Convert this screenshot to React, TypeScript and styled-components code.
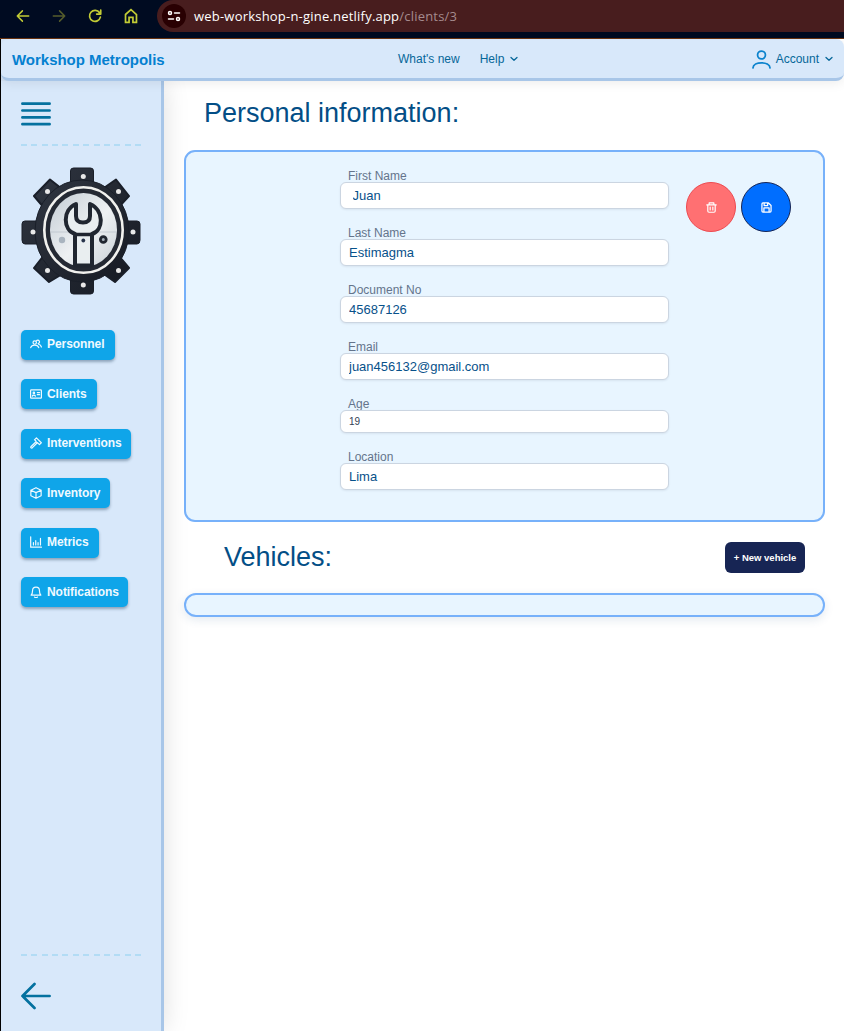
import React from "react";
import styled, { createGlobalStyle } from "styled-components";

const GlobalStyle = createGlobalStyle`
  * { box-sizing: border-box; }
  html, body { margin: 0; background: #fff; }
  body { font-family: "Liberation Sans", Arial, sans-serif; overflow: hidden; }
  button, input { font-family: inherit; margin: 0; }
`;

const Page = styled.div`
  width: 844px;
  height: 1031px;
  display: flex;
  flex-direction: column;
  overflow: hidden;
`;

const BrowserBar = styled.div`
  height: 39px;
  flex: none;
  display: flex;
  align-items: flex-start;
  background: #000b21;
  border-bottom: 1px solid #6b3410;
`;

const BrowserNav = styled.div`
  display: flex;
  width: 157px;
  height: 31px;
  align-items: center;
  gap: 20px;
  padding-left: 15px;
  flex: none;
  svg { flex: none; }
`;

const AddressBar = styled.div`
  flex: 1;
  height: 32px;
  display: flex;
  align-items: center;
  background: #481d1e;
  border-radius: 16px 0 0 16px;
  padding: 0 0 1px 5px;
`;

const SiteBadge = styled.span`
  width: 24px;
  height: 24px;
  border-radius: 50%;
  background: #290002;
  display: grid;
  place-items: center;
  margin-right: 8px;
`;

const Url = styled.span`
  font: 13px/20px "Open Sans", "Noto Sans", sans-serif;
  letter-spacing: 0.21px;
  color: #fff;
  white-space: nowrap;
`;

const UrlPath = styled.span`
  color: #a58b8e;
`;

const Shell = styled.div`
  flex: 1;
  min-height: 0;
  display: flex;
  flex-direction: column;
  border-left: 1px solid #000;
  background: linear-gradient(to right, #d8e8fa 50%, #fff 50%);
`;

const Header = styled.header`
  position: relative;
  z-index: 2;
  height: 42px;
  flex: none;
  display: grid;
  grid-template-columns: 397px 1fr auto;
  align-items: center;
  background: #d8e8fa;
  border-bottom: 3px solid #a8c6e8;
  border-radius: 8px;
  box-shadow: 0 2px 12px rgba(0, 0, 0, 0.08);
  padding-right: 11px;
`;

const Brand = styled.div`
  padding-left: 11px;
  font-size: 15px;
  font-weight: 700;
  letter-spacing: -0.02px;
  padding-top: 2px;
  color: #0480d0;
`;

const HeaderGroup = styled.nav`
  display: flex;
  align-items: center;
  gap: 20px;
`;

const HeaderItem = styled.a`
  display: flex;
  align-items: center;
  font-size: 12px;
  color: #066799;
  svg.chevron { margin-left: 6px; }
  svg.user { margin: 1px 5px 0 0; }
`;

const Body = styled.div`
  flex: 1;
  min-height: 0;
  display: flex;
`;

const Sidebar = styled.aside`
  position: relative;
  z-index: 1;
  width: 163px;
  flex: none;
  display: flex;
  flex-direction: column;
  align-items: flex-start;
  background: #d8e8fa;
  border-right: 3px solid #a8c6e8;
  box-shadow: 0 0 24px rgba(0, 0, 0, 0.13);
  padding: 21px 20px;
`;

const IconButton = styled.button`
  padding: 0;
  border: 0;
  background: none;
  display: block;
  svg { display: block; }
`;

const Dashes = styled.div`
  width: 120px;
  height: 2px;
  flex: none;
  background: repeating-linear-gradient(90deg, #b2dcf5 0 6px, transparent 6px 10.36px);
`;

const TopDashes = styled(Dashes)`
  margin: 18px 0 21px;
`;

const Logo = styled.svg`
  display: block;
  flex: none;
`;

const Menu = styled.nav`
  display: flex;
  flex-direction: column;
  align-items: flex-start;
  gap: 19.5px;
  margin-top: 33.75px;
`;

const MenuButton = styled.button<{ $width: number }>`
  width: ${(p) => p.$width}px;
  height: 30px;
  display: flex;
  align-items: center;
  gap: 5px;
  padding: 0 0 1px 9px;
  border: 0;
  border-radius: 5px;
  background: #0fa5e9;
  color: #f0f9ff;
  font-size: 12px;
  font-weight: 700;
  letter-spacing: -0.06px;
  white-space: nowrap;
  box-shadow: 0 2px 3px rgba(30, 60, 90, 0.4);
  svg { flex: none; }
`;

const SidebarFooter = styled.div`
  margin-top: auto;
  height: 56px;
  display: flex;
  flex-direction: column;
  justify-content: space-between;
`;

const Main = styled.main`
  flex: 1;
  display: flex;
  flex-direction: column;
  padding: 0 19px 0 20px;
  background: #fff;
`;

const Title = styled.h1`
  margin: 0;
  font-size: 27px;
  font-weight: 400;
  line-height: 32px;
  color: #034e86;
`;

const PageTitle = styled(Title)`
  padding: 16px 0 21px 20px;
`;

const Card = styled.section`
  background: #e8f5ff;
  border: 2px solid #77b1fa;
  border-radius: 11px;
`;

const InfoCard = styled(Card)`
  height: 372px;
  display: flex;
  padding: 16px 0 0 154px;
`;

const Fields = styled.div`
  width: 329px;
  display: flex;
  flex-direction: column;
  gap: 16px;
`;

const Field = styled.label`
  display: flex;
  flex-direction: column;
`;

const Label = styled.span`
  height: 14px;
  padding-left: 8px;
  font-size: 12px;
  line-height: 17px;
  color: #64748b;
`;

const Input = styled.input<{ $small?: boolean; $inset?: boolean }>`
  width: 100%;
  height: ${(p) => (p.$small ? 23 : 27)}px;
  padding: 0 8px 0 ${(p) => (p.$inset ? 11.5 : 8)}px;
  border: 1px solid #cbd5e1;
  border-radius: 6px;
  background: #fff;
  outline: none;
  font-size: ${(p) => (p.$small ? 10 : 13)}px;
  color: ${(p) => (p.$small ? "#334155" : "#07518a")};
  box-shadow: 0 1px 2px rgba(20, 40, 60, 0.08);
`;

const Actions = styled.div`
  display: flex;
  gap: 5px;
  margin: 14px 0 0 17px;
`;

const RoundButton = styled.button<{ $fill: string; $edge: string }>`
  width: 50px;
  height: 50px;
  padding: 0;
  display: grid;
  place-items: center;
  border-radius: 50%;
  border: 1px solid ${(p) => p.$edge};
  background: ${(p) => p.$fill};
`;

const VehiclesHead = styled.div`
  height: 71px;
  display: flex;
  align-items: center;
  justify-content: space-between;
  padding: 0 20px 2px 40px;
`;

const NewVehicle = styled.button`
  width: 80px;
  height: 31px;
  margin-top: 2px;
  padding: 0;
  border: 0;
  border-radius: 6px;
  background: #172554;
  color: #fff;
  font-size: 9.5px;
  font-weight: 700;
  white-space: nowrap;
`;

const VehiclesCard = styled(Card)`
  height: 24px;
  border-radius: 12px;
  box-shadow: 0 3px 10px rgba(30, 80, 130, 0.12);
`;

type IconProps = { size?: number; children: React.ReactNode; width?: number; color?: string; className?: string };

const Icon = ({ size = 12, width = 1.4, color = "currentColor", children, className }: IconProps) => (
  <svg className={className} width={size} height={size} viewBox="0 0 14 14" fill="none" stroke={color}
    strokeWidth={width} strokeLinecap="round" strokeLinejoin="round">
    {children}
  </svg>
);

const Chevron = () => (
  <svg className="chevron" width="8" height="8" viewBox="0 0 8 8" fill="none" stroke="#066799" strokeWidth="1.3"
    strokeLinecap="round" strokeLinejoin="round">
    <path d="M1 2.5 4 5.3 7 2.5" />
  </svg>
);

const menuItems = [
  {
    label: "Personnel", width: 94,
    icon: <><circle cx="5.5" cy="5.3" r="2" /><path d="M.8 11.300C1.500 9 3.300 8.300 5.500 8.300s4 .7 4.700 3M7.500 3.300a2 2 0 1 1 2 3.200M10 7.300c1.900.3 2.900 1.500 3.300 3.200" /></>,
  },
  {
    label: "Clients", width: 76,
    icon: <><rect x=".7" y="2.3" width="12.600" height="9.600" rx=".8" /><circle cx="4.500" cy="5.700" r=".9" /><path d="M2.700 9.500c.2-1.500 3.400-1.500 3.600 0M8.500 5.300h2.700M8.500 7.800h2.700" /></>,
  },
  {
    label: "Interventions", width: 110,
    icon: <path d="M5.2 3.3 7.500 1l5.700 5.700-2.200 2.200-2-2-.8.100-5.700 5.700c-1 .7-2-.5-1.500-1.300L7 5.500 6.700 4.300ZM7 5.500l1.600 1.500" />,
  },
  {
    label: "Inventory", width: 89,
    icon: <path d="M7 .8 13 3.700v6.600L7 13.200 1 10.300V3.700ZM1 3.700l6 2.900 6-2.900M7 6.600v6.600" />,
  },
  {
    label: "Metrics", width: 78,
    icon: <path d="M.8 1v12h12.500M4 7.800v2.700M6.700 5.500v5M9.400 7.800v2.700M12.200 2.800v7.700" />,
  },
  {
    label: "Notifications", width: 107,
    icon: <path d="M1.300 10.600h11.400C11 9 11 8 11 5.200a4 4 0 0 0-8 0C3 8 3 9 1.300 10.600ZM5.300 12.900c.7.800 2.700.8 3.400 0" />,
  },
];

const fields = [
  { label: "First Name", value: "Juan", inset: true },
  { label: "Last Name", value: "Estimagma" },
  { label: "Document No", value: "45687126" },
  { label: "Email", value: "juan456132@gmail.com" },
  { label: "Age", value: "19", small: true },
  { label: "Location", value: "Lima" },
];

const bolts = [[62.3, 9.5], [26.5, 24.5], [97.5, 24.5], [12, 65], [112, 65], [26.5, 103.5], [97.5, 103.5], [62.3, 118]];

const GearLogo = () => (
  <Logo width="120" height="129" viewBox="0 0 120 129">
    <defs>
      <linearGradient id="steel" x1="0" y1="0" x2="1" y2="1">
        <stop offset="0" stopColor="#303641" />
        <stop offset="1" stopColor="#161a23" />
      </linearGradient>
      <linearGradient id="plate" x1="0" y1="0" x2="1" y2="1">
        <stop offset="0" stopColor="#c3ccd4" />
        <stop offset=".55" stopColor="#eef1f3" />
        <stop offset="1" stopColor="#c9d1d7" />
      </linearGradient>
    </defs>
    <g fill="url(#steel)" stroke="#1a1f29" strokeWidth="1">
      <path d="M49.500 20V4q0-3 3-3h17q3 0 3 3v16ZM49.500 110v14q0 3 3 3h17q3 0 3-3v-14ZM18 54H4q-3 0-3 3v16q0 4 3 4h14ZM104 54h12q3 0 3 3v16q0 4-3 4h-12Z" />
      <path d="M24 42 13 29 29 12.500l14 11ZM80 23 95 12.500 108 29 96 42ZM24 87 13 101 28 115 43 106ZM80 105 94 115 108 101 97 88Z" strokeWidth="2" strokeLinejoin="round" />
      <ellipse cx="61" cy="64" rx="47" ry="51" />
    </g>
    <ellipse cx="62.500" cy="63" rx="39.200" ry="42.800" fill="#242933" stroke="#f1f1ee" strokeWidth="2.600" />
    <ellipse cx="62.500" cy="63" rx="33.500" ry="37" fill="url(#plate)" />
    <path d="M30 65h18M76 65h19" stroke="#b7c0c8" strokeWidth=".7" />
    <path d="M55 37C41 43 42 63 54 67V98.500H71V67C83 63 83 43 69 37V49Q69 55.500 62 55.500 55 55.500 55 49Z" fill="#e9eef0" stroke="#202630" strokeWidth="4" strokeLinejoin="round" />
    <path d="M54 67.500h17" stroke="#202630" strokeWidth="3.500" />
    <circle cx="62.300" cy="73.500" r="1.900" fill="#27334b" />
    <circle cx="82.300" cy="72.500" r="2.900" fill="#a4aeb7" stroke="#202630" strokeWidth="2.800" />
    <circle cx="41" cy="73" r="3.200" fill="#a9b4bf" />
    <g fill="#e8e8e8">
      {bolts.map(([x, y]) => (
        <circle key={`${x}-${y}`} cx={x} cy={y} r="2.500" />
      ))}
    </g>
  </Logo>
);

export default function App() {
  return (
    <Page>
      <GlobalStyle />
      <BrowserBar>
        <BrowserNav>
          <Icon size={16} width={1.3} color="#c2cc35"><path d="M12 7H2M6.500 2.500 2 7l4.500 4.500" /></Icon>
          <Icon size={16} width={1.3} color="#555d2c"><path d="M2 7h10M7.500 2.500 12 7l-4.500 4.500" /></Icon>
          <Icon size={16} width={1.5} color="#c2cc35"><path d="M11.700 8A4.800 4.800 0 1 1 11 4.200M12 1.800v3.500H8.500" /></Icon>
          <Icon size={16} width={1.5} color="#c2cc35"><path d="M2.200 5.700 7 1.500l4.800 4.200v6.800H8.700V8.200H5.300v4.300H2.200Z" strokeLinejoin="miter" /></Icon>
        </BrowserNav>
        <AddressBar>
          <SiteBadge>
            <Icon size={14} width={1.5} color="#fff"><circle cx="3" cy="4" r="1.500" /><path d="M7.500 4h5M1.500 10h5" /><circle cx="11" cy="10" r="1.500" /></Icon>
          </SiteBadge>
          <Url>web-workshop-n-gine.netlify.app<UrlPath>/clients/3</UrlPath></Url>
        </AddressBar>
      </BrowserBar>
      <Shell>
        <Header>
          <Brand>Workshop Metropolis</Brand>
          <HeaderGroup>
            <HeaderItem>What's new</HeaderItem>
            <HeaderItem>Help<Chevron /></HeaderItem>
          </HeaderGroup>
          <HeaderItem>
            <Icon className="user" size={19} width={1.3} color="#0c83cd"><circle cx="7" cy="3.700" r="2.900" /><path d="M.7 13.200C.9 8.200 13.100 8.200 13.300 13.200" /></Icon>
            Account<Chevron />
          </HeaderItem>
        </Header>
        <Body>
          <Sidebar>
            <IconButton aria-label="Menu">
              <svg width="30" height="24" viewBox="0 0 30 24" stroke="#04719f" strokeWidth="2.700" strokeLinecap="round">
                <path d="M1.400 1.700h27.200M1.400 8.500h27.200M1.400 15.400h27.200M1.400 22.200h27.200" />
              </svg>
            </IconButton>
            <TopDashes />
            <GearLogo />
            <Menu>
              {menuItems.map((item) => (
                <MenuButton key={item.label} $width={item.width}>
                  <Icon width={1.4}>{item.icon}</Icon>
                  {item.label}
                </MenuButton>
              ))}
            </Menu>
            <SidebarFooter>
              <Dashes />
              <IconButton aria-label="Back">
                <svg width="30" height="28" viewBox="0 0 30 28" fill="none" stroke="#04719f" strokeWidth="2.700" strokeLinecap="round" strokeLinejoin="round">
                  <path d="M28.600 14H1.500M13.500 2 1.500 14l12 12" />
                </svg>
              </IconButton>
            </SidebarFooter>
          </Sidebar>
          <Main>
            <PageTitle>Personal information:</PageTitle>
            <InfoCard>
              <Fields>
                {fields.map((f) => (
                  <Field key={f.label}>
                    <Label>{f.label}</Label>
                    <Input defaultValue={f.value} $small={f.small} $inset={f.inset} />
                  </Field>
                ))}
              </Fields>
              <Actions>
                <RoundButton aria-label="Delete" $fill="#ff7072" $edge="#ed4a50">
                  <Icon size={11} color="#fff" width={1.5}><path d="M1 3.700h12M4 3.500V1.200h6v2.300M2.300 3.700v7.800q0 1.500 1.500 1.500h6.400q1.500 0 1.500-1.500V3.700M5.300 6.500v3.700M8.700 6.500v3.700" /></Icon>
                </RoundButton>
                <RoundButton aria-label="Save" $fill="#006eff" $edge="#172554">
                  <Icon size={11} color="#fff" width={1.6}><path d="M2.500 1.200h7L12.800 4.500v7q0 1.300-1.300 1.300h-9q-1.300 0-1.300-1.300v-9q0-1.300 1.300-1.300ZM4 1.500v3h4.500v-3M3.700 12.500v-5h6.600v5" /></Icon>
                </RoundButton>
              </Actions>
            </InfoCard>
            <VehiclesHead>
              <Title as="h2">Vehicles:</Title>
              <NewVehicle>+ New vehicle</NewVehicle>
            </VehiclesHead>
            <VehiclesCard />
          </Main>
        </Body>
      </Shell>
    </Page>
  );
}
